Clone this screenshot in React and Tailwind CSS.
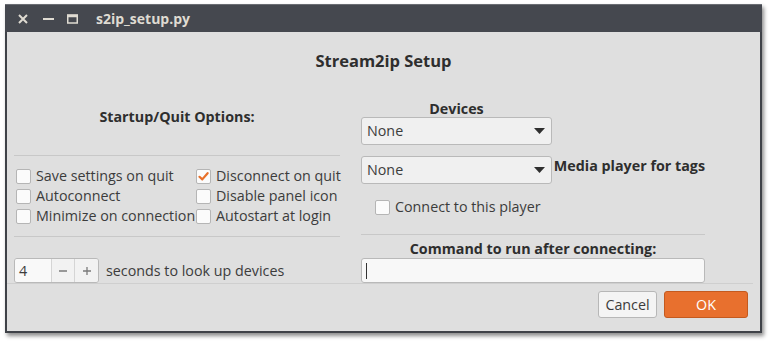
function Check({ checked, label }) {
  return (
    <div className="flex h-[20px] items-center">
      <div className="flex h-[15px] w-[15px] shrink-0 items-center justify-center rounded-[2px] border border-[#b5b5b5] bg-[#fbfbfb]">
        {checked ? (
          <svg width="11" height="11" viewBox="0 0 11 11">
            <path d="M1.5 5.8 L4.3 8.4 L9.6 2.2" fill="none" stroke="#e8702a" strokeWidth="2.2" strokeLinecap="round" strokeLinejoin="round" />
          </svg>
        ) : null}
      </div>
      <span className="ml-[5px] whitespace-nowrap">{label}</span>
    </div>
  )
}

function Combo() {
  return (
    <div className="flex h-[28px] w-[191px] items-center justify-between rounded-[3px] border border-[#b9b9b9] bg-[#f0f0f0] pl-[5px] pr-[6px]">
      <span>None</span>
      <svg width="11" height="6" viewBox="0 0 11 6">
        <path d="M0 0 H11 L5.5 6 Z" fill="#2f2f2f" />
      </svg>
    </div>
  )
}

export default function App() {
  return (
    <div className="h-[347px] w-[775px] bg-white pl-[5px] pt-[4px] text-[14.3px] leading-[18px] text-[#3c3c3c]" style={{ fontFamily: '"Open Sans", sans-serif' }}>
      <div className="flex h-[329px] w-[757px] flex-col border-2 border-t-0 border-[#3f4248] bg-[#dfdfdf] shadow-[2px_3px_4px_rgba(0,0,0,0.45)]">
        {/* title bar */}
        <div className="-mx-[2px] flex h-[28px] shrink-0 items-center border-t border-[#6a6d73] bg-[#45484f] pl-[13px] text-[#dfdbd2]">
          <svg width="10" height="10" viewBox="0 0 10 10">
            <path d="M1 1 L9 9 M9 1 L1 9" stroke="#dfdbd2" strokeWidth="2" />
          </svg>
          <svg className="ml-[15px]" width="11" height="10" viewBox="0 0 11 10">
            <path d="M0 5 H11" stroke="#dfdbd2" strokeWidth="2" />
          </svg>
          <svg className="ml-[13px]" width="11" height="10" viewBox="0 0 11 10">
            <rect x="0.75" y="1" width="9.5" height="8" fill="none" stroke="#dfdbd2" strokeWidth="1.5" />
            <path d="M0 2 H11" stroke="#dfdbd2" strokeWidth="2.5" />
          </svg>
          <span className="ml-[18px] text-[14px] font-bold">s2ip_setup.py</span>
        </div>

        {/* heading */}
        <div className="flex h-[66px] shrink-0 items-start justify-center pt-[18px]">
          <span className="text-[16.5px] font-bold leading-[22px] text-[#2e2e2e]">Stream2ip Setup</span>
        </div>

        {/* columns */}
        <div className="flex pl-[7px]">
          <div className="flex w-[326px] flex-col">
            <div className="h-[57px] pt-[10px] text-center font-bold text-[#2e2e2e]">Startup/Quit Options:</div>
            <div className="h-px bg-[#c8c8c8]" />
            <div className="mt-[10px] grid grid-cols-[180px_1fr] pl-[2px]">
              <Check label="Save settings on quit" />
              <Check checked label="Disconnect on quit" />
              <Check label="Autoconnect" />
              <Check label="Disable panel icon" />
              <Check label="Minimize on connection" />
              <Check label="Autostart at login" />
            </div>
            <div className="mt-[10px] h-px bg-[#c8c8c8]" />
            <div className="mt-[21px] flex items-center">
              <div className="flex h-[25px] w-[85px] overflow-hidden rounded-[3px] border border-[#b9b9b9]">
                <div className="flex w-[36px] items-center bg-[#f9f9f9] pl-[4px]">4</div>
                <div className="flex w-[24px] items-center justify-center border-l border-[#d5d5d5] bg-[#f2f2f2]">
                  <svg width="10" height="10" viewBox="0 0 10 10">
                    <path d="M1 5 H9" stroke="#7a7a7a" strokeWidth="1.3" />
                  </svg>
                </div>
                <div className="flex w-[24px] items-center justify-center border-l border-[#d5d5d5] bg-[#f2f2f2]">
                  <svg width="10" height="10" viewBox="0 0 10 10">
                    <path d="M1 5 H9 M5 1 V9" stroke="#7a7a7a" strokeWidth="1.3" />
                  </svg>
                </div>
              </div>
              <span className="ml-[7px]">seconds to look up devices</span>
            </div>
          </div>

          <div className="ml-[21px] flex w-[344px] flex-col">
            <div className="h-[19px] w-[191px] pt-[1px] text-center font-bold leading-[19px] text-[#2e2e2e]">Devices</div>
            <Combo />
            <div className="mt-[11px] flex items-start">
              <Combo />
              <span className="ml-[2px] mt-[1px] whitespace-nowrap font-bold text-[#2e2e2e]">Media player for tags</span>
            </div>
            <div className="ml-[14px] mt-[13px]">
              <Check label="Connect to this player" />
            </div>
            <div className="mt-[17px] h-px bg-[#c8c8c8]" />
            <div className="mt-[5px] h-[18px] text-center font-bold text-[#2e2e2e]">Command to run after connecting:</div>
            <div className="flex h-[25px] items-center rounded-[3px] border border-[#b9b9b9] bg-[#f8f8f8] pl-[4px]">
              <div className="h-[16px] w-px bg-[#333]" />
            </div>
          </div>
        </div>

        {/* action area */}
        <div className="mr-[7px] h-px bg-[#cfcfcf]" />
        <div className="flex justify-end gap-[7px] pr-[12px] pt-[7px]">
          <div className="flex h-[27px] w-[59px] items-center justify-center rounded-[3px] border border-[#b7b7b7] bg-[#f4f4f4]">Cancel</div>
          <div className="flex h-[27px] w-[84px] items-center justify-center rounded-[3px] border border-[#c45a1f] bg-[#e8702e] text-white">OK</div>
        </div>
      </div>
    </div>
  )
}
